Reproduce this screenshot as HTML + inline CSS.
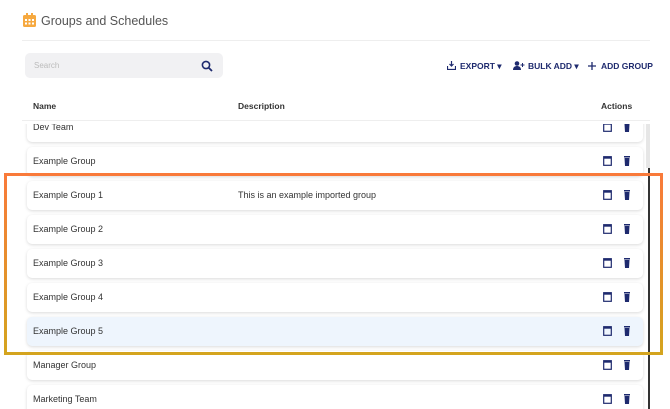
<!DOCTYPE html><html><head><style>
body{margin:0;width:670px;height:409px;overflow:hidden;background:#fff;font-family:"Liberation Sans",sans-serif;position:relative}
.a{position:absolute}
.row{position:absolute;left:27px;width:616px;height:29px;background:#fff;border-radius:5px;box-shadow:0 1px 3px rgba(0,0,0,.15);font-size:9px;color:#333}
.row span{position:absolute;top:9px;left:6px}
.ic{position:absolute;top:9px;left:576px}
.btn{position:absolute;top:61px;font-size:8.5px;font-weight:bold;color:#1e2a6e}
</style></head><body>
<svg class="a" style="left:23px;top:13px" width="13" height="14" viewBox="0 0 13 14"><rect x="0" y="2" width="13" height="12" rx="1.5" fill="#f6a940"/><rect x="3" y="0" width="2" height="4" fill="#f6a940"/><rect x="8" y="0" width="2" height="4" fill="#f6a940"/><g fill="#fff"><rect x="2" y="6" width="2" height="2"/><rect x="5.5" y="6" width="2" height="2"/><rect x="9" y="6" width="2" height="2"/><rect x="2" y="9.5" width="2" height="2"/><rect x="5.5" y="9.5" width="2" height="2"/><rect x="9" y="9.5" width="2" height="2"/></g></svg>
<div class="a" style="left:41px;top:14px;font-size:12.5px;color:#555">Groups and Schedules</div>
<div class="a" style="left:22px;top:40px;width:628px;height:1px;background:#eee"></div>
<div class="a" style="left:25px;top:53px;width:198px;height:25px;background:#f1f1f3;border-radius:5px"></div>
<div class="a" style="left:34px;top:61px;font-size:8px;color:#bbb">Search</div>
<svg class="a" style="left:201px;top:60px" width="12" height="12" viewBox="0 0 12 12"><circle cx="5" cy="5" r="3.6" stroke="#1e2a6e" stroke-width="1.6" fill="none"/><path d="M7.7 7.7L11 11" stroke="#1e2a6e" stroke-width="1.8"/></svg>
<svg class="a" style="left:447px;top:61px" width="9" height="9" viewBox="0 0 9 9"><path d="M4.5 0v5M2.5 3l2 2 2-2M.5 5v3.5h8V5" stroke="#1e2a6e" stroke-width="1.2" fill="none"/></svg>
<div class="btn" style="left:460px">EXPORT ▾</div>
<svg class="a" style="left:513px;top:61px" width="12" height="9" viewBox="0 0 12 9"><circle cx="4" cy="2.5" r="2.3" fill="#1e2a6e"/><path d="M0 9c0-3 2-4 4-4s4 1 4 4z" fill="#1e2a6e"/><path d="M9.5 2v4M7.5 4h4" stroke="#1e2a6e" stroke-width="1"/></svg>
<div class="btn" style="left:528px">BULK ADD ▾</div>
<svg class="a" style="left:588px;top:62px" width="8" height="8" viewBox="0 0 8 8"><path d="M4 0v8M0 4h8" stroke="#1e2a6e" stroke-width="1.3"/></svg>
<div class="btn" style="left:601px">ADD GROUP</div>
<div class="a" style="left:33px;top:101px;font-size:8.5px;font-weight:bold;color:#333">Name</div>
<div class="a" style="left:238px;top:101px;font-size:8.5px;font-weight:bold;color:#333">Description</div>
<div class="a" style="left:601px;top:101px;font-size:8.5px;font-weight:bold;color:#333">Actions</div>
<div class="a" style="left:22px;top:120px;width:628px;height:1px;background:#eee"></div>
<div class="a" style="left:0;top:124px;width:650px;height:285px;overflow:hidden">
<div id="rows"></div>
</div>
<script>
var n=["Dev Team","Example Group","Example Group 1","Example Group 2","Example Group 3","Example Group 4","Example Group 5","Manager Group","Marketing Team"];
var h="";for(var i=0;i<9;i++){var y=113+34*i-124;h+='<div class="row" style="top:'+y+'px;'+(i==6?'background:#eef5fd':'')+'"><span>'+n[i]+'</span>'+(i==2?'<span style="left:211px">This is an example imported group</span>':'')+'<svg class="ic" width="30" height="10" viewBox="0 0 30 10"><rect x=".7" y=".7" width="7.6" height="8.6" fill="none" stroke="#1e2a6e" stroke-width="1.2"/><rect x=".7" y=".7" width="7.6" height="2" fill="#1e2a6e"/><rect x="21" y="0" width="6" height="1.5" fill="#1e2a6e"/><path d="M21.5 2h5l-.5 8h-4z" fill="#1e2a6e"/></svg></div>'}
document.getElementById("rows").innerHTML=h;
</script>
<div class="a" style="left:646px;top:124px;width:4px;height:44px;background:#e6e6e6"></div>
<div class="a" style="left:648px;top:168px;width:2px;height:241px;background:#333"></div>
<div class="a" style="left:4px;top:173px;width:653px;height:176px;border:3px solid;border-image:linear-gradient(#f97a3a,#d4a41e) 1"></div>
</body></html>
